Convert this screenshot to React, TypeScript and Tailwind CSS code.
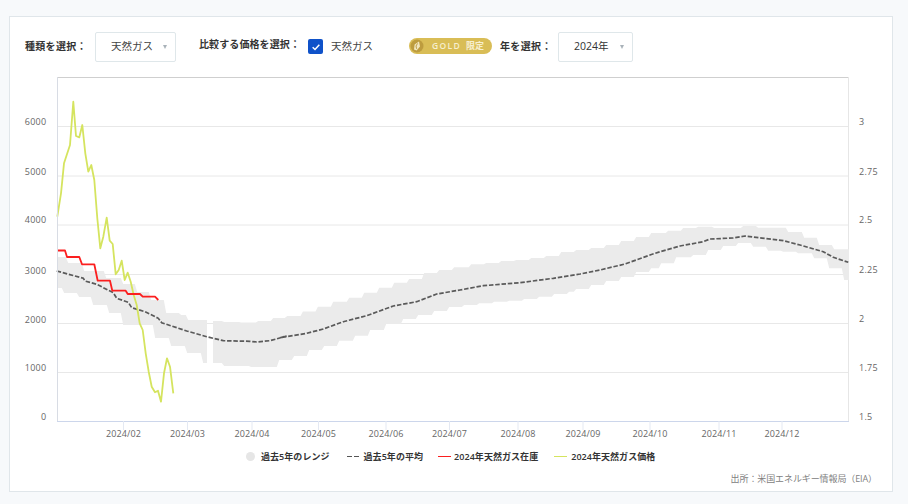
import React from "react";

const FONT = { fontFamily: '"Open Sans","Noto Sans CJK JP",sans-serif' };

type P = [number, number];
const z = (ox: number, oy: number, pts: P[]): P[] => pts.map(([x, y]) => [ox + x / 3, oy + y / 3] as P);
const d = (pts: P[]) => pts.map(([x, y], i) => `${i ? "L" : "M"}${x.toFixed(1)} ${y.toFixed(1)}`).join(" ");

const upperSteps: P[] = [
  [67, 257], [83, 263], [105, 271], [122, 278], [136, 284], [150, 292], [165, 300], [180, 313], [187, 315], [207, 320],
  [223, 321], [240, 322], [257, 322.6], [272, 321], [286, 318], [301.7, 316], [316.7, 311.6], [332, 306.7], [348, 301.7],
  [363, 297.7], [378, 292.7], [393, 287.7], [408, 282.7], [423, 279], [438, 273], [453, 270], [470, 267.3], [485, 264.3],
  [500, 263], [515, 261], [530, 260], [545, 258], [560, 256], [575, 252], [590, 250], [605, 248], [620, 245], [635, 241],
  [650, 237], [667, 233], [682, 230.7], [697, 228], [713, 226.7], [742, 228], [757, 226], [787, 227.7], [803, 232],
  [818, 237.7], [833, 245], [849, 249.3],
];
const lowerSteps: P[] = [
  [63, 288], [78, 293], [92, 297], [108, 305], [122, 313], [154, 325], [170, 338], [186, 346], [202, 353], [207, 363],
  [223, 363], [250, 366], [278, 367], [293, 360], [308, 356], [323, 350], [338, 346], [354, 340.7], [369, 335.7],
  [385, 330], [402, 324], [417, 319], [433, 315], [448, 311], [463, 307], [478, 305], [493, 303.3], [508, 301.7],
  [523, 300.7], [538, 299], [553, 296.7], [568, 294], [575, 291.7], [590, 289], [605, 285], [620, 281], [635, 277],
  [650, 272], [660, 268.3], [675, 263.3], [692, 257.3], [707, 255], [722, 250], [737, 246], [752, 243], [767, 246.7],
  [782, 250.7], [797, 251.7], [813, 253.3], [828, 258.3], [843, 268.3], [849, 280],
];

function band(upper: P[], lower: P[], from: number, to: number) {
  const stepped = (steps: P[]) => {
    const out: P[] = [];
    let prev = 57;
    for (const [xe, y] of steps) {
      const a = Math.max(prev, from);
      const b = Math.min(xe, to);
      if (b > a) {
        out.push([a === from ? a : a + 1.2, y], [b === to ? b : b - 1.2, y]);
      }
      prev = xe;
    }
    return out;
  };
  const u = stepped(upper);
  const l = stepped(lower).reverse();
  return d([...u, ...l]) + " Z";
}

const mean: P[] = [
  ...z(30, 270, [
    [80, 3], [160, 25], [165, 33], [200, 43], [250, 68], [260, 85], [295, 97], [305, 113], [345, 125], [385, 145],
    [395, 158], [470, 183], [530, 200], [580, 212], [660, 214], [680, 216], [720, 212], [770, 198],
  ]),
  ...z(280, 250, [
    [0, 263], [80, 250], [130, 237], [190, 215], [260, 197], [340, 168], [410, 155], [470, 132], [540, 120], [610, 107],
    [720, 98], [820, 85], [900, 72],
  ]),
  [600, 270], [625, 264],
  ...z(650, 200, [
    [0, 165], [30, 155], [90, 138], [160, 125], [180, 117], [250, 114], [285, 108], [400, 122], [450, 135], [520, 155],
    [550, 172], [595, 187],
  ]),
];

const red: P[] = [
  [57, 250.5], [65, 250.5], [67, 257], [79.3, 257], [82, 264.3], [94.3, 264.3], [97.7, 280.7], [110, 280.7], [112.3, 290.7],
  [125.7, 290.7], [127.7, 294], [140, 294], [142.7, 296.7], [155, 296.7], [158.3, 300],
];

const green: P[] = [
  ...z(30, 90, [
    [82, 380], [93, 310], [102, 220], [120, 165], [130, 35], [138, 138], [148, 142], [157, 105], [166, 190], [175, 245],
    [184, 225], [193, 270], [202, 385], [211, 475], [220, 440], [230, 383], [239, 452], [248, 462], [257, 553], [266, 540],
    [275, 512],
  ]),
  ...z(30, 270, [
    [284, 30], [293, 8], [302, 35], [311, 75], [320, 105], [329, 160], [338, 180], [347, 250], [356, 305], [365, 350],
    [375, 367], [384, 362], [393, 395], [402, 310], [411, 265], [420, 290], [430, 370],
  ]),
];

const gridY = [126.5, 176, 225, 274.5, 323.5, 372.5];
const leftLabels: [string, number][] = [["6000", 122], ["5000", 172], ["4000", 220], ["3000", 271], ["2000", 320], ["1000", 368], ["0", 417]];
const rightLabels: [string, number][] = [["3", 122], ["2.75", 172], ["2.5", 220], ["2.25", 270], ["2", 319], ["1.75", 368], ["1.5", 417]];
const months: [string, number][] = [
  ["2024/02", 123.5], ["2024/03", 187.5], ["2024/04", 252], ["2024/05", 318.5], ["2024/06", 386], ["2024/07", 449.5],
  ["2024/08", 518], ["2024/09", 583], ["2024/10", 650], ["2024/11", 719], ["2024/12", 782],
];

function Chart() {
  return (
    <svg viewBox="10 70 882 370" className="block w-[882px] h-[370px]">
      <rect x="57" y="77" width="792" height="344" fill="#ffffff" />
      <line x1="57" y1="77.5" x2="849" y2="77.5" stroke="#cfcfcf" />
      <line x1="848.5" y1="77" x2="848.5" y2="421" stroke="#e6e6e6" />
      {gridY.map((y) => (
        <line key={y} x1="57" y1={y} x2="848" y2={y} stroke="#e8e8e8" />
      ))}
      <path d={band(upperSteps, lowerSteps, 57, 207)} fill="#ebebeb" />
      <path d={band(upperSteps, lowerSteps, 213, 849)} fill="#ebebeb" />
      <path d={d(mean)} fill="none" stroke="#5a5a5a" strokeWidth="1.7" strokeDasharray="4.5 1.8" />
      <path d={d(green)} fill="none" stroke="#d5e45f" strokeWidth="1.8" strokeLinejoin="round" />
      <path d={d(red)} fill="none" stroke="#fb1f1f" strokeWidth="1.8" strokeLinejoin="round" />
      <line x1="57.5" y1="77" x2="57.5" y2="421" stroke="#d8dce4" />
      <line x1="57" y1="421.5" x2="849" y2="421.5" stroke="#ccd6eb" />
      {months.map(([t, x]) => (
        <g key={t}>
          <line x1={x} y1="421" x2={x} y2="430" stroke="#e4e9f3" />
          <text x={x} y="437" textAnchor="middle" fontSize="9" letterSpacing="0.15" fill="#666666">{t}</text>
        </g>
      ))}
      {leftLabels.map(([t, y]) => (
        <text key={t} x="46.5" y={y + 3} textAnchor="end" fontSize="9" letterSpacing="0.3" fill="#666666">{t}</text>
      ))}
      {rightLabels.map(([t, y]) => (
        <text key={t} x="859" y={y + 3} fontSize="9" letterSpacing="0.3" fill="#666666">{t}</text>
      ))}
    </svg>
  );
}

function Caret() {
  return <span className="w-0 h-0 border-l-[2.5px] border-r-[2.5px] border-t-[4px] border-l-transparent border-r-transparent border-t-[#a9b2b9]" />;
}

function Select({ children, className }: { children: React.ReactNode; className: string }) {
  return (
    <div className={`flex items-center h-[30px] border border-[#dfe7ea] rounded-[2px] text-[10.5px] text-[#444444] ${className}`}>
      {children}
    </div>
  );
}

function Legend() {
  const label = "text-[9px] font-semibold tracking-[0.05px] text-[#333333] whitespace-nowrap";
  return (
    <div className="flex items-center h-[33px] pl-[236px]">
      <span className="w-[9px] h-[9px] rounded-full bg-[#e6e6e6]" />
      <span className={`ml-[6px] mr-[17px] ${label}`}>過去5年のレンジ</span>
      <span className="flex gap-[2px] mr-[5px]">
        <span className="w-[5px] h-[1.5px] bg-[#555555]" />
        <span className="w-[5px] h-[1.5px] bg-[#555555]" />
      </span>
      <span className={`mr-[15px] ${label}`}>過去5年の平均</span>
      <span className="w-[13px] h-[1.5px] bg-[#fb1f1f] mr-[3px]" />
      <span className={`mr-[16px] ${label}`}>2024年天然ガス在庫</span>
      <span className="w-[13px] h-[1.5px] bg-[#d5e45f] mr-[4px]" />
      <span className={label}>2024年天然ガス価格</span>
    </div>
  );
}

export default function App() {
  return (
    <div className="w-[908px] h-[504px] bg-[#f7f9fb] pt-[16px] pl-[9px] overflow-hidden" style={FONT}>
      <div className="w-[884px] h-[476px] bg-white border border-[#e0e6ea]">
        <div className="h-[53px] flex items-start pl-[15px] pt-[15px]">
          <span className="mt-[7px] w-[70px] text-[10px] font-semibold tracking-[0.3px] text-[#333333] whitespace-nowrap">種類を選択：</span>
          <Select className="w-[81px] pl-[15px]">
            <span className="w-[52px] whitespace-nowrap">天然ガス</span>
            <Caret />
          </Select>
          <span className="ml-[23px] mt-[5px] w-[109px] text-[10px] font-semibold tracking-[0.1px] text-[#333333] whitespace-nowrap">比較する価格を選択：</span>
          <span className="mt-[7px] w-[15px] h-[15px] rounded-[2px] bg-[#0f52c9] flex items-center justify-center">
            <svg viewBox="0 0 12 12" className="w-[10px] h-[10px]">
              <path d="M2 6.3 L4.8 9 L10 3.2" fill="none" stroke="#ffffff" strokeWidth="1.8" />
            </svg>
          </span>
          <span className="ml-[8px] mt-[7px] w-[78px] text-[10.5px] text-[#444444] whitespace-nowrap">天然ガス</span>
          <span className="mt-[6px] w-[83px] h-[16px] rounded-full bg-[#d9bd56] flex items-center pl-[1px]">
            <svg viewBox="0 0 14 14" className="w-[14px] h-[14px] shrink-0">
              <circle cx="7" cy="7" r="6.5" fill="#bd9c3e" />
              <path d="M9 2.4 L4.6 5.6 L4 10.4 L6.6 11.6 L10 7.6 Z" fill="#f1e6bd" />
              <path d="M7.6 4.4 L6 7 L6.6 9.8" fill="none" stroke="#b8963c" strokeWidth="0.9" />
            </svg>
            <span className="ml-[8px] text-[8.5px] font-semibold tracking-[1.3px] text-[#f7efcf] whitespace-nowrap">GOLD</span>
            <span className="ml-[5px] text-[9px] font-bold text-[#f7efcf] whitespace-nowrap">限定</span>
          </span>
          <span className="ml-[8px] mt-[7px] w-[58px] text-[10px] font-semibold tracking-[0.35px] text-[#333333] whitespace-nowrap">年を選択：</span>
          <Select className="w-[75px] pl-[15px]">
            <span className="w-[46px] whitespace-nowrap text-[10.5px] text-[#333333]">2024年</span>
            <Caret />
          </Select>
        </div>
        <Chart />
        <Legend />
        <div className="h-[12px] flex items-center justify-end pr-[15px] text-[9px] tracking-[-0.1px] text-[#808080] whitespace-nowrap">
          出所：米国エネルギー情報局（EIA）
        </div>
      </div>
    </div>
  );
}
